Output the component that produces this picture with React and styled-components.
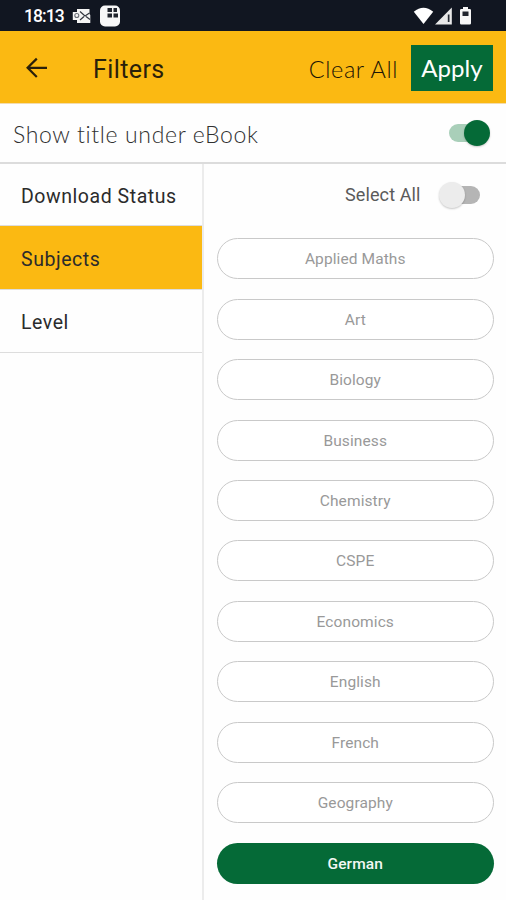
import React, { useState } from 'react';
import styled, { createGlobalStyle } from 'styled-components';

const GlobalStyle = createGlobalStyle`
  body {
    margin: 0;
    background: #ffffff;
  }

  * {
    box-sizing: border-box;
  }
`;

const Screen = styled.div`
  display: flex;
  flex-direction: column;
  width: 506px;
  height: 900px;
  overflow: hidden;
  background: #fefefe;
  font-family: Roboto, sans-serif;
`;

const StatusBar = styled.div`
  display: flex;
  flex: none;
  justify-content: space-between;
  height: 31px;
  padding: 0 33px 0 24px;
  background: #111621;
`;

const StatusGroup = styled.div`
  display: flex;
  align-items: flex-start;
`;

const Clock = styled.span`
  width: 48px;
  font-size: 17.5px;
  font-weight: 500;
  line-height: 32px;
  letter-spacing: -0.9px;
  white-space: nowrap;
  color: #ffffff;
`;

const Header = styled.header`
  display: flex;
  flex: none;
  align-items: center;
  height: 73px;
  padding: 2px 13px 0 24px;
  border-bottom: 1px solid #f3dcae;
  background: #fbb912;
`;

const BackButton = styled.button`
  display: flex;
  width: 69px;
  padding: 0;
  border: none;
  background: none;
`;

const Title = styled.h1`
  flex: 1;
  margin: 0;
  padding-top: 3px;
  font-size: 25px;
  font-weight: 400;
  line-height: 30px;
  letter-spacing: 0.4px;
  color: #2a200a;
`;

const ClearButton = styled.button`
  margin-right: 13px;
  padding: 1px 0 0;
  border: none;
  background: none;
  font-family: Lato, sans-serif;
  font-size: 23.5px;
  font-weight: 300;
  line-height: 30px;
  letter-spacing: 0.6px;
  white-space: nowrap;
  color: #1c1505;
`;

const ApplyButton = styled.button`
  width: 82px;
  height: 46px;
  padding: 0;
  border: none;
  background: #056a37;
  font-family: Lato, sans-serif;
  font-size: 24px;
  line-height: 46px;
  letter-spacing: 0.1px;
  color: #ffffff;
`;

const TitleRow = styled.div`
  display: flex;
  flex: none;
  align-items: center;
  justify-content: space-between;
  height: 60px;
  padding: 0 16px 0 13px;
  border-bottom: 2px solid #dcdcdc;
`;

const TitleLabel = styled.span`
  padding-top: 2px;
  font-family: Lato, sans-serif;
  font-size: 23px;
  font-weight: 300;
  letter-spacing: 0.65px;
  white-space: nowrap;
  color: #303030;
`;

const Track = styled.button`
  display: flex;
  flex: none;
  align-items: center;
  justify-content: ${props => (props.$on ? 'flex-end' : 'flex-start')};
  width: 41px;
  height: 18px;
  padding: 0;
  border: none;
  border-radius: 9px;
  background: linear-gradient(${props => (props.$on ? '#a9cfb9, #a9cfb9' : '#b5b5b5, #b5b5b5')})
    ${props => (props.$on ? 'left' : 'right')} / 30px 18px no-repeat;
`;

const Thumb = styled.span`
  flex: none;
  width: 26px;
  height: 26px;
  border-radius: 50%;
  background: ${props => (props.$on ? '#056a37' : '#ececec')};
  box-shadow: 0 1px 2px rgba(0, 0, 0, 0.22);
`;

const Body = styled.main`
  display: flex;
  flex: 1;
  min-height: 0;
`;

const Sidebar = styled.nav`
  flex: none;
  width: 204px;
  border-right: 2px solid #ececec;
`;

const Tab = styled.button`
  display: block;
  width: 100%;
  height: ${props => (props.$first ? 62.4 : 63.4)}px;
  padding: 3px 0 0 21px;
  border: none;
  border-bottom: 1px solid #dddddd;
  background: ${props => (props.$active ? '#fbb912' : 'transparent')};
  font-family: Roboto, sans-serif;
  font-size: 19.5px;
  letter-spacing: 0.55px;
  text-align: left;
  white-space: nowrap;
  color: #2b2b2b;
`;

const Panel = styled.section`
  flex: 1;
  padding: 0 13px;
`;

const SelectAll = styled.div`
  display: flex;
  align-items: center;
  justify-content: flex-end;
  gap: 18px;
  height: 74.3px;
  padding: 0 14px 13px 0;
`;

const SelectLabel = styled.span`
  font-size: 18px;
  letter-spacing: 0.1px;
  color: #5a5a5a;
`;

const Subjects = styled.div`
  display: flex;
  flex-direction: column;
  gap: 19.45px;
`;

const Pill = styled.button`
  flex: none;
  width: 276.5px;
  height: 41px;
  padding: 1px 0 0;
  border: ${props => (props.$selected ? 'none' : '1.5px solid #c9c9c9')};
  border-radius: 21px;
  background: ${props => (props.$selected ? '#056a37' : '#ffffff')};
  font-family: Roboto, sans-serif;
  font-size: 15.5px;
  font-weight: ${props => (props.$selected ? 500 : 400)};
  letter-spacing: 0.1px;
  color: ${props => (props.$selected ? '#f2f8f4' : '#999999')};
`;

const tabs = ['Download Status', 'Subjects', 'Level'];

const subjects = [
  'Applied Maths',
  'Art',
  'Biology',
  'Business',
  'Chemistry',
  'CSPE',
  'Economics',
  'English',
  'French',
  'Geography',
  'German'
];

const NotificationIcons = () => (
  <svg width="50" height="31" viewBox="0 0 50 31">
    <path d="M5 9h12.500v5l.8 1v8H5v-3H0.800v-8H5z" fill="#f4f4f4" />
    <circle cx="4.800" cy="15.500" r="2" fill="none" stroke="#6a6e76" strokeWidth="1.100" />
    <path d="M8 11.500l5 4.500 4.500-3M8 20l4-3.500M14 16.500l4 3" fill="none" stroke="#30343d" strokeWidth="1.200" />
    <rect x="28" y="5.500" width="20" height="21" rx="5" fill="#f7f7f7" />
    <path d="M35.500 8h4.500v4h-4.500zM41.500 8h3.500v4h-3.500zM35.500 13.500h4.500v4h-4.500zM41.500 13.500h4.500v4h-4.500z" fill="#20242d" />
  </svg>
);

const SystemIcons = () => (
  <svg width="60" height="31" viewBox="0 0 60 31">
    <path d="M0.800 11.800Q10.500 3.500 20.200 11.800L10.500 24z" fill="#ffffff" />
    <path d="M38.800 7.500V24.500H22z" fill="#e8e8e8" />
    <path d="M34.800 14.500h1.700V22h-1.700z" fill="#252a33" />
    <path d="M50 7h5v2h1.700q1.300 0 1.300 1.300V23.200q0 1.300-1.300 1.300h-8.400q-1.300 0-1.300-1.300V10.300Q47 9 48.300 9h1.700z" fill="#f7f7f7" />
    <rect x="49.500" y="11.500" width="6" height="4.500" fill="#20242d" />
  </svg>
);

const BackArrow = () => (
  <svg width="26" height="26" viewBox="0 0 26 26">
    <path d="M23 12.800H4M12.800 3.600L3.600 12.800l9.200 9.200" fill="none" stroke="#2a200a" strokeWidth="2.200" />
  </svg>
);

const Toggle = ({ on, onClick }) => (
  <Track $on={on} onClick={onClick}>
    <Thumb $on={on} />
  </Track>
);

const App = () => {
  const [showTitle, setShowTitle] = useState(true);
  const [activeTab, setActiveTab] = useState('Subjects');
  const [selected, setSelected] = useState(['German']);

  const allSelected = selected.length === subjects.length;

  const toggleSubject = name => {
    setSelected(selected.includes(name) ? selected.filter(s => s !== name) : [...selected, name]);
  };

  return (
    <Screen>
      <GlobalStyle />
      <StatusBar>
        <StatusGroup>
          <Clock>18:13</Clock>
          <NotificationIcons />
        </StatusGroup>
        <StatusGroup>
          <SystemIcons />
        </StatusGroup>
      </StatusBar>
      <Header>
        <BackButton>
          <BackArrow />
        </BackButton>
        <Title>Filters</Title>
        <ClearButton onClick={() => setSelected([])}>Clear All</ClearButton>
        <ApplyButton>Apply</ApplyButton>
      </Header>
      <TitleRow>
        <TitleLabel>Show title under eBook</TitleLabel>
        <Toggle on={showTitle} onClick={() => setShowTitle(!showTitle)} />
      </TitleRow>
      <Body>
        <Sidebar>
          {tabs.map((tab, i) => (
            <Tab key={tab} $first={i === 0} $active={tab === activeTab} onClick={() => setActiveTab(tab)}>
              {tab}
            </Tab>
          ))}
        </Sidebar>
        <Panel>
          <SelectAll>
            <SelectLabel>Select All</SelectLabel>
            <Toggle on={allSelected} onClick={() => setSelected(allSelected ? [] : subjects)} />
          </SelectAll>
          <Subjects>
            {subjects.map(name => (
              <Pill key={name} $selected={selected.includes(name)} onClick={() => toggleSubject(name)}>
                {name}
              </Pill>
            ))}
          </Subjects>
        </Panel>
      </Body>
    </Screen>
  );
};

export default App;
